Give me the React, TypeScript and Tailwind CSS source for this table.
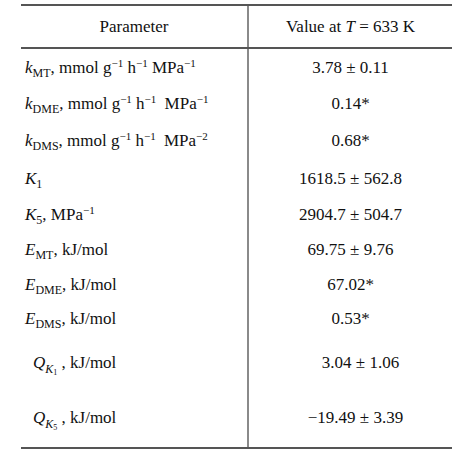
import React from "react";

const M = "\u2212";

function Sub({ children }: { children: React.ReactNode }) {
  return <span className="align-[-4px] text-[12px] leading-none not-italic">{children}</span>;
}

function Sup({ children }: { children: React.ReactNode }) {
  return <span className="align-[6px] text-[11px] leading-none">{children}</span>;
}

function Units({ gap, last }: { gap?: boolean; last: string }) {
  return (
    <>
      , mmol g<Sup>{M}1</Sup> h<Sup>{M}1</Sup>
      <span className={gap ? "ml-[4px]" : ""}> MPa</span>
      <Sup>{last}</Sup>
    </>
  );
}

function QK({ n }: { n: string }) {
  return (
    <>
      <i>Q</i>
      <span className="align-[-5px] text-[12px] italic leading-none">
        K<span className="align-[-2px] text-[8px] not-italic">{n}</span>
      </span>{" "}
      , kJ/mol
    </>
  );
}

type Row = { h: string; left: React.ReactNode; right: string; shift?: string; indent?: string };

const rows: Row[] = [
  {
    h: "h-[37px]",
    left: (
      <>
        <i>k</i>
        <Sub>MT</Sub>
        <Units last={`${M}1`} />
      </>
    ),
    right: "3.78 ± 0.11",
  },
  {
    h: "h-[36px]",
    left: (
      <>
        <i>k</i>
        <Sub>DME</Sub>
        <Units gap last={`${M}1`} />
      </>
    ),
    right: "0.14*",
  },
  {
    h: "h-[38px]",
    left: (
      <>
        <i>k</i>
        <Sub>DMS</Sub>
        <Units gap last={`${M}2`} />
      </>
    ),
    right: "0.68*",
  },
  {
    h: "h-[38px]",
    left: (
      <>
        <i>K</i>
        <Sub>1</Sub>
      </>
    ),
    right: "1618.5 ± 562.8",
  },
  {
    h: "h-[34px]",
    left: (
      <>
        <i>K</i>
        <Sub>5</Sub>, MPa<Sup>{M}1</Sup>
      </>
    ),
    right: "2904.7 ± 504.7",
  },
  {
    h: "h-[36px]",
    left: (
      <>
        <i>E</i>
        <Sub>MT</Sub>, kJ/mol
      </>
    ),
    right: "69.75 ± 9.76",
  },
  {
    h: "h-[33px]",
    left: (
      <>
        <i>E</i>
        <Sub>DME</Sub>, kJ/mol
      </>
    ),
    right: "67.02*",
  },
  {
    h: "h-[36px]",
    left: (
      <>
        <i>E</i>
        <Sub>DMS</Sub>, kJ/mol
      </>
    ),
    right: "0.53*",
  },
  {
    h: "h-[52px]",
    indent: "pl-[12px]",
    left: <QK n="1" />,
    right: "3.04 ± 1.06",
    shift: "pl-[20px]",
  },
  {
    h: "h-[58px]",
    indent: "pl-[12px]",
    left: <QK n="5" />,
    right: `${M}19.49 ± 3.39`,
    shift: "pl-[10px]",
  },
];

export default function App() {
  return (
    <div className="w-[461px] h-[453px] bg-white pt-[4px] pl-[21px] font-[family-name:'Liberation_Serif',serif] text-[17px] text-[#111]">
      <div className="w-[431px] border-t-2 border-b-2 border-[#555]">
        <div className="grid grid-cols-[228px_203px] h-[43px] border-b-2 border-[#555]">
          <div className="flex items-center justify-center border-r-2 border-[#8a8a8a] pt-[1px]">Parameter</div>
          <div className="flex items-center justify-center pt-[1px]">
            Value at&nbsp;<i>T</i>&nbsp;= 633 K
          </div>
        </div>
        {rows.map((r, i) => (
          <div key={i} className={`grid grid-cols-[228px_203px] ${r.h}`}>
            <div className={`flex items-center whitespace-nowrap border-r-2 border-[#8a8a8a] ${r.indent ?? "pl-[4px]"}`}>
              <span>{r.left}</span>
            </div>
            <div className={`flex items-center justify-center whitespace-nowrap ${r.shift ?? ""}`}>{r.right}</div>
          </div>
        ))}
      </div>
    </div>
  );
}
